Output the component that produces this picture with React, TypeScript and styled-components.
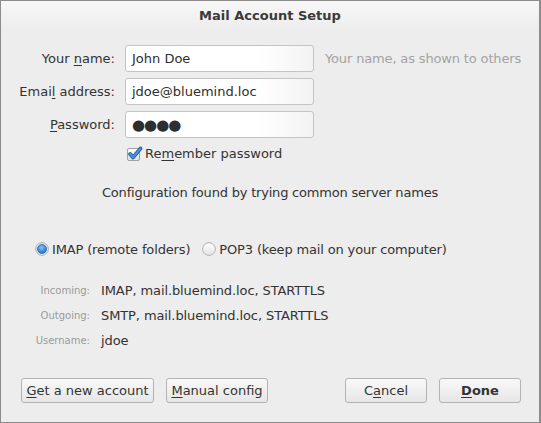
import React from "react";
import styled, { createGlobalStyle } from "styled-components";

const Global = createGlobalStyle`
  html, body { margin: 0; padding: 0; background: #ededed; }
  body { font-family: "DejaVu Sans", "Liberation Sans", sans-serif; font-size: 13px; color: #333; }
  * { box-sizing: border-box; }
`;

const Window = styled.div`
  width: 541px;
  height: 423px;
  display: flex;
  flex-direction: column;
  background: #ededed;
  border: 1px solid #8c8c8c;
  border-right-width: 2px;
`;

const TitleBar = styled.div`
  height: 29px;
  line-height: 29px;
  text-align: center;
  font-weight: bold;
  font-size: 13px;
  color: #3a3a3a;
  background: linear-gradient(#f7f7f7, #ededed);
`;

const FormGrid = styled.div`
  display: grid;
  grid-template-columns: 114px 189px auto;
  column-gap: 10px;
  row-gap: 6px;
  margin-top: 15px;
  align-items: center;
`;

const Label = styled.label`
  text-align: right;
  color: #333;
  white-space: nowrap;
`;

const Key = styled.span`
  text-decoration: underline;
  text-underline-offset: 2px;
`;

const Input = styled.div<{ $dots?: boolean }>`
  height: 27px;
  border: 1px solid #c4c4c4;
  border-radius: 3px;
  background: linear-gradient(to right, #ffffff 70%, #f3f3f3);
  padding-left: 6px;
  display: flex;
  align-items: center;
  color: #2e2e2e;
  font-size: ${(p) => (p.$dots ? "15px" : "13px")};
  letter-spacing: ${(p) => (p.$dots ? "-1px" : "0")};
  white-space: nowrap;
`;

const Hint = styled.span`
  color: #a3a3a3;
  white-space: nowrap;
  margin-left: 1px;
  letter-spacing: -0.15px;
`;

const CheckRow = styled.div`
  grid-column: 2 / 4;
  display: flex;
  align-items: center;
  gap: 2px;
  height: 18px;
  margin-left: 2px;
`;

const Centered = styled.div`
  text-align: center;
  margin-top: 23px;
  line-height: 16px;
  letter-spacing: -0.2px;
`;

const RadioRow = styled.div`
  display: flex;
  align-items: center;
  padding-left: 34px;
  margin-top: 40px;
  height: 16px;
  gap: 12px;
  letter-spacing: -0.15px;
`;

const RadioItem = styled.div`
  display: flex;
  align-items: center;
  gap: 3px;
  white-space: nowrap;
`;

const DetailGrid = styled.div`
  display: grid;
  grid-template-columns: 89px auto;
  column-gap: 11px;
  grid-auto-rows: 25px;
  align-items: center;
  margin-top: 21px;
`;

const SmallLabel = styled.span`
  text-align: right;
  font-size: 10px;
  color: #9a9a9a;
`;

const Value = styled.span`
  color: #333;
  letter-spacing: -0.1px;
`;

const ButtonRow = styled.div`
  margin-top: auto;
  display: flex;
  align-items: center;
  padding: 0 18px 19px 20px;
`;

const Button = styled.div<{ $w: number; $bold?: boolean; $gapLeft?: number }>`
  width: ${(p) => p.$w}px;
  height: 25px;
  margin-left: ${(p) => p.$gapLeft ?? 0}px;
  border: 1px solid #b3b3b3;
  border-radius: 3px;
  background: linear-gradient(#f9f9f9, #e6e6e6);
  display: flex;
  align-items: center;
  justify-content: center;
  font-weight: ${(p) => (p.$bold ? "bold" : "normal")};
  color: #333;
  white-space: nowrap;
`;

const Spacer = styled.div`
  flex: 1;
`;

function CheckBox() {
  return (
    <svg width="16" height="15" viewBox="0 0 16 15">
      <defs>
        <linearGradient id="cbg" x1="0" y1="0" x2="0" y2="1">
          <stop offset="0" stopColor="#ffffff" />
          <stop offset="1" stopColor="#e0e0e0" />
        </linearGradient>
      </defs>
      <rect x="0.5" y="2.5" width="12" height="12" rx="1.5" fill="url(#cbg)" stroke="#a0a0a0" />
      <path d="M3 8 L6 11.5 L13.5 2.5" fill="none" stroke="#1f4f96" strokeWidth="3.6" strokeLinejoin="round" strokeLinecap="round" />
      <path d="M3 8 L6 11.5 L13.5 2.5" fill="none" stroke="#4a90e2" strokeWidth="2.2" strokeLinejoin="round" strokeLinecap="round" />
    </svg>
  );
}

function Radio({ checked }: { checked?: boolean }) {
  return (
    <svg width="14" height="14" viewBox="0 0 14 14">
      <defs>
        <radialGradient id="rsel" cx="0.45" cy="0.35" r="0.7">
          <stop offset="0" stopColor="#8cc4f7" />
          <stop offset="0.6" stopColor="#3d8ae0" />
          <stop offset="1" stopColor="#2767b8" />
        </radialGradient>
        <linearGradient id="roff" x1="0" y1="0" x2="0" y2="1">
          <stop offset="0" stopColor="#ffffff" />
          <stop offset="1" stopColor="#e4e4e4" />
        </linearGradient>
      </defs>
      <circle cx="7" cy="7" r="6.3" fill="#f4f4f4" stroke="#a8a8a8" />
      {checked ? (
        <circle cx="7" cy="7" r="4.6" fill="url(#rsel)" stroke="#2b5fa5" strokeWidth="0.7" />
      ) : (
        <circle cx="7" cy="7" r="5.6" fill="url(#roff)" />
      )}
    </svg>
  );
}

export default function App() {
  return (
    <>
      <Global />
      <Window>
        <TitleBar>Mail Account Setup</TitleBar>
        <FormGrid>
          <Label>
            Your <Key>n</Key>ame:
          </Label>
          <Input>John Doe</Input>
          <Hint>Your name, as shown to others</Hint>

          <Label>
            Emai<Key>l</Key> address:
          </Label>
          <Input>jdoe@bluemind.loc</Input>
          <span />

          <Label>
            <Key>P</Key>assword:
          </Label>
          <Input $dots>●●●●</Input>
          <span />

          <span />
          <CheckRow>
            <CheckBox />
            <span>
              Re<Key>m</Key>ember password
            </span>
          </CheckRow>
        </FormGrid>

        <Centered>Configuration found by trying common server names</Centered>

        <RadioRow>
          <RadioItem>
            <Radio checked />
            <span>IMAP (remote folders)</span>
          </RadioItem>
          <RadioItem>
            <Radio />
            <span>POP3 (keep mail on your computer)</span>
          </RadioItem>
        </RadioRow>

        <DetailGrid>
          <SmallLabel>Incoming:</SmallLabel>
          <Value>IMAP, mail.bluemind.loc, STARTTLS</Value>
          <SmallLabel>Outgoing:</SmallLabel>
          <Value>SMTP, mail.bluemind.loc, STARTTLS</Value>
          <SmallLabel>Username:</SmallLabel>
          <Value>jdoe</Value>
        </DetailGrid>

        <ButtonRow>
          <Button $w={133}>
            <Key>G</Key>et a new account
          </Button>
          <Button $w={102} $gapLeft={12}>
            <Key>M</Key>anual config
          </Button>
          <Spacer />
          <Button $w={82}>
            C<Key>a</Key>ncel
          </Button>
          <Button $w={82} $gapLeft={12} $bold>
            <Key>D</Key>one
          </Button>
        </ButtonRow>
      </Window>
    </>
  );
}
